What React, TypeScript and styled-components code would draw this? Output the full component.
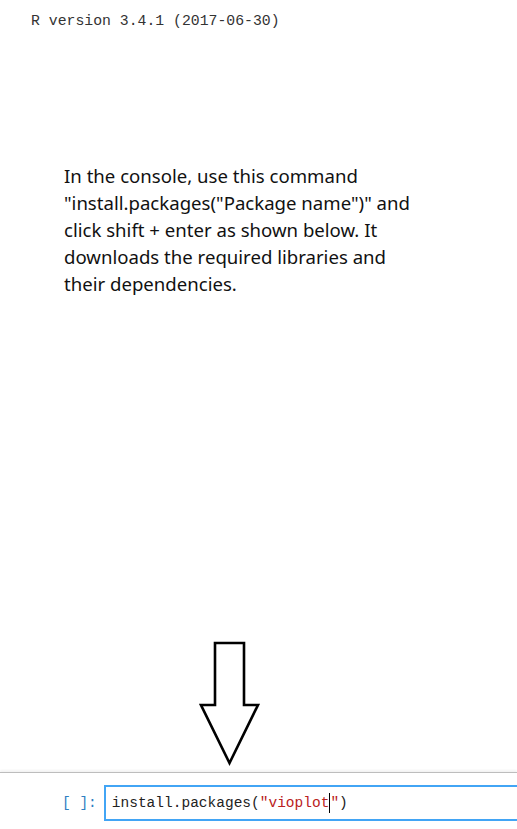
import styled, { createGlobalStyle } from "styled-components";

const Global = createGlobalStyle`
  html, body {
    margin: 0;
    padding: 0;
    background: #fff;
  }
`;

const Page = styled.div`
  height: 829px;
  display: flex;
  flex-direction: column;
  overflow: hidden;
`;

const Version = styled.pre`
  margin: 0;
  padding: 11px 0 0 31px;
  font-family: "Liberation Mono", "DejaVu Sans Mono", monospace;
  font-size: 14.8px;
  line-height: 20px;
  color: #333;
`;

const Note = styled.p`
  margin: 131px 0 0 64px;
  width: 360px;
  font-family: "Noto Sans", "Open Sans", sans-serif;
  font-size: 18.6px;
  line-height: 27px;
  color: #111;
`;

const ArrowWrap = styled.div`
  margin-top: auto;
  padding-left: 199px;
  height: 132px;
  margin-bottom: -1px;
  position: relative;
  z-index: 1;
`;

const Footer = styled.div`
  border-top: 1px solid #bdbdbd;
  box-shadow: 0 -2px 2px #f3f3f3;
  display: flex;
  align-items: center;
  padding: 12px 0 8px 62px;
  gap: 7px;
`;

const Prompt = styled.span`
  font-family: "Liberation Mono", "DejaVu Sans Mono", monospace;
  font-size: 14.5px;
  color: #307fc1;
  white-space: pre;
`;

const Input = styled.div`
  flex: 1;
  height: 32px;
  margin-right: -4px;
  border: 2px solid #42a5f5;
  border-right: none;
  display: flex;
  align-items: center;
  padding-left: 6px;
  font-family: "Liberation Mono", "DejaVu Sans Mono", monospace;
  font-size: 14.5px;
  color: #222;
  white-space: pre;
`;

const Str = styled.span`
  color: #ba2121;
`;

const Caret = styled.span`
  display: inline-block;
  width: 1px;
  height: 20px;
  background: #000;
  vertical-align: middle;
`;

function Arrow() {
  return (
    <svg width="62" height="126" viewBox="0 0 62 126">
      <path
        d="M16 2 H45 V64 H59 L30.5 122 L2 64 H16 Z"
        fill="#fff"
        stroke="#000"
        strokeWidth="2.6"
        strokeLinejoin="miter"
      />
    </svg>
  );
}

export default function App() {
  return (
    <Page>
      <Global />
      <Version>R version 3.4.1 (2017-06-30)</Version>
      <Note>
        In the console, use this command "install.packages("Package name")"
        and click shift + enter as shown below. It downloads the required
        libraries and their dependencies.
      </Note>
      <ArrowWrap>
        <Arrow />
      </ArrowWrap>
      <Footer>
        <Prompt>[ ]:</Prompt>
        <Input>
          install.packages(<Str>"vioplot</Str>
          <Caret />
          <Str>"</Str>)
        </Input>
      </Footer>
    </Page>
  );
}
